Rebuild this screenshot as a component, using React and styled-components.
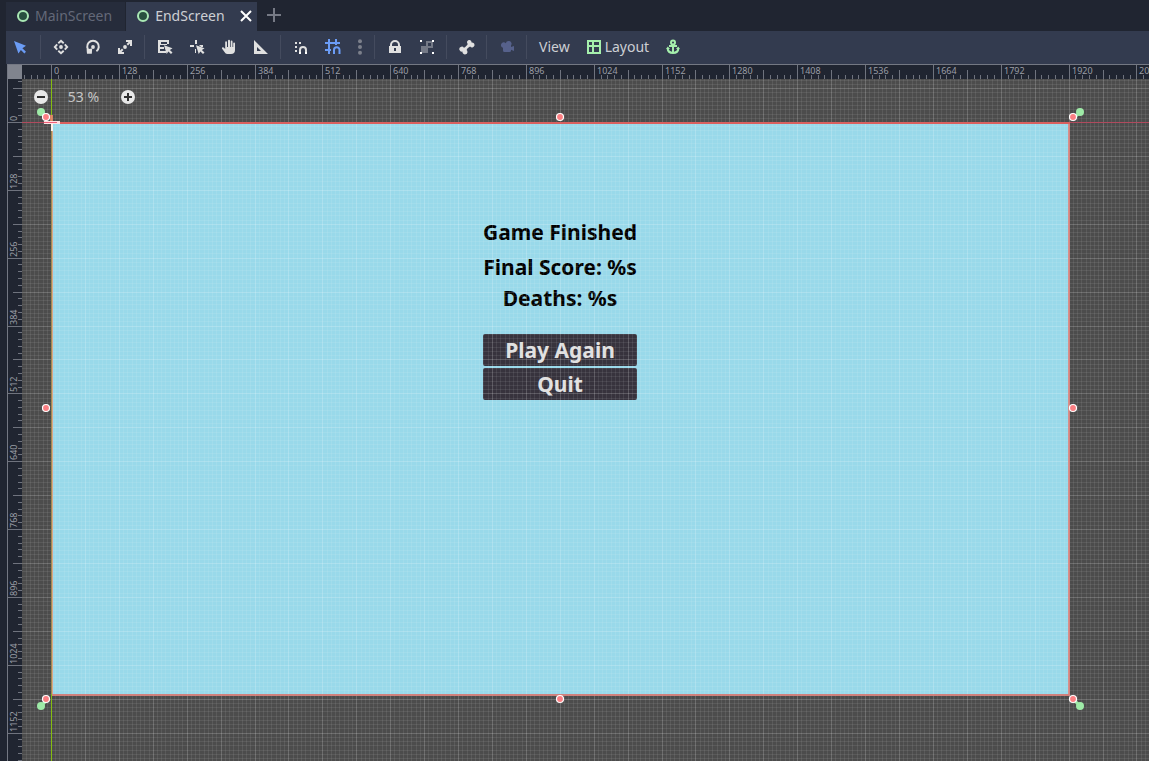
import React, { useLayoutEffect, useRef, useState } from "react";
import styled, { createGlobalStyle } from "styled-components";

const ZOOM = 0.53;
const ORIGIN = { x: 29, y: 43 };
const RULER = 14;
const SCREEN = { w: Math.round(1920 * ZOOM), h: Math.round(1080 * ZOOM) };

const GlobalStyle = createGlobalStyle`
  * { box-sizing: border-box; }
  body { margin: 0; background: #202531; overflow: hidden; }
  button, input { font: inherit; color: inherit; }
`;

const Editor = styled.main`
  height: 100vh;
  display: flex;
  flex-direction: column;
  padding-left: 6px;
  background: #202531;
  color: #cdcfd4;
  font: 14px/20px "Noto Sans", "Open Sans", sans-serif;
`;

const TabBar = styled.nav`
  display: flex;
  align-items: stretch;
  height: 31px;
  padding-top: 2px;
`;

const Tab = styled.div`
  display: flex;
  align-items: center;
  gap: 13px;
  padding: ${(p) => (p.$active ? "0 3px 2px 9px" : "0 13px 2px 8px")};
  background: ${(p) => (p.$active ? "#333b4f" : "#262c3b")};
  border-left: 1px solid ${(p) => (p.$active ? "#202531" : "transparent")};
  color: ${(p) => (p.$active ? "#cdcfd4" : "#636878")};
`;

const PlainButton = styled.button`
  display: inline-flex;
  align-items: center;
  justify-content: center;
  padding: 0;
  border: 0;
  background: none;
  cursor: pointer;
`;

const TabLabel = styled(PlainButton)`
  gap: 4px;
`;

const AddTab = styled(PlainButton)`
  width: 34px;
  padding-bottom: 3px;
  color: #767a85;
`;

const Toolbar = styled.div`
  display: flex;
  align-items: center;
  gap: 4px;
  height: 33px;
  padding: 0 0 2px 1px;
  background: #333b4f;
`;

const ToolButton = styled(PlainButton)`
  height: 28px;
  width: ${(p) => (p.$narrow ? "18px" : "28px")};
  color: ${(p) => p.$color || "#e0e0e0"};
`;

const MenuButton = styled(PlainButton)`
  height: 28px;
  padding: 0 6px;
  gap: 3px;
`;

const Separator = styled.span`
  width: 4px;
  height: 24px;
  background: linear-gradient(#444b5e, #444b5e) 1px 0 / 1px 100% no-repeat;
`;

const Icon = styled.svg`
  display: block;
  flex: none;
  fill: currentColor;
  color: ${(p) => p.$color || "inherit"};
`;

const Workspace = styled.section`
  flex: 1;
  min-height: 0;
  margin-left: 1px;
  display: grid;
  grid-template: 14px minmax(0, 1fr) / 14px minmax(0, 1fr);
  border: solid #747883;
  border-width: 1px 0 0 1px;
`;

const Corner = styled.div`
  background: #80848e;
`;

const RulerSvg = styled.svg`
  width: 100%;
  height: 100%;
  display: block;
  overflow: hidden;
  background: #202531;
  shape-rendering: crispEdges;
  text {
    font: 9px "Noto Sans", "Open Sans", sans-serif;
    fill: #9a9da5;
  }
`;

const Viewport = styled.div`
  position: relative;
  overflow: hidden;
  background: #4c4c4c;
`;

const GameScreen = styled.div`
  position: absolute;
  left: ${ORIGIN.x}px;
  top: ${ORIGIN.y}px;
  width: ${SCREEN.w}px;
  height: ${SCREEN.h}px;
  display: flex;
  flex-direction: column;
  align-items: center;
  padding-top: 95px;
  background: #99d9ea;
  color: #000;
  font: bold 21px/30px "Noto Sans", "Open Sans", sans-serif;
`;

const Title = styled.h1`
  margin: 0 0 5px;
  font: inherit;
`;

const Stat = styled.p`
  margin: 0;
  line-height: 31px;
`;

const GameActions = styled.div`
  display: flex;
  flex-direction: column;
  gap: 2px;
  width: 154px;
  margin-top: 20px;
`;

const GameButton = styled(PlainButton)`
  height: 32px;
  border-radius: 2px;
  background: #37333d;
  color: #e0e0e0;
`;

const Overlay = styled.svg`
  position: absolute;
  inset: 0;
  width: 100%;
  height: 100%;
  pointer-events: none;
`;

const ZoomControl = styled.div`
  position: absolute;
  left: 11px;
  top: 10px;
  display: flex;
  align-items: center;
  height: 16px;
`;

const ZoomValue = styled(PlainButton)`
  width: 71px;
  height: 20px;
  padding-right: 2px;
  color: #c4c4c4;
`;

const range = (from, to) => Array.from({ length: Math.max(0, to - from + 1) }, (_, i) => i + from);

function useSize() {
  const ref = useRef(null);
  const [size, setSize] = useState({ width: 0, height: 0 });
  useLayoutEffect(() => {
    const measure = () => {
      const box = ref.current.getBoundingClientRect();
      setSize({ width: box.width, height: box.height });
    };
    measure();
    window.addEventListener("resize", measure);
    return () => window.removeEventListener("resize", measure);
  }, []);
  return [ref, size];
}

const icons = {
  select: <path d="M1 2 5.4 14.5 7.9 10.9 11.4 14.4 13 12.8 9.4 9.3 13 6.7Z" />,
  move: (
    <>
      <circle cx="8" cy="8" r="1.9" />
      <path
        d="M5.3 4.2 8 1.8 10.7 4.2M5.3 11.8 8 14.2 10.7 11.8M4.2 5.3 1.8 8 4.2 10.7M11.8 5.3 14.2 8 11.8 10.7"
        fill="none"
        stroke="currentColor"
        strokeWidth="1.9"
      />
    </>
  ),
  rotate: (
    <>
      <path d="M4.6 12.2A5.8 5.8 0 1 1 11.4 12.2" fill="none" stroke="currentColor" strokeWidth="2" />
      <path d="M1.6 10.2 7.2 9.5 6.8 14.7 2 14.7Z" />
      <circle cx="8" cy="8" r="1.9" />
    </>
  ),
  scale: (
    <>
      <path d="M9 1H15V7H13V4.5L11 6.4 9.6 5 11.5 3H9ZM1 9H3V11.5L5 9.6 6.4 11 4.5 13H7V15H1Z" />
      <circle cx="8" cy="8" r="1.9" />
    </>
  ),
  list: (
    <>
      <path d="M1 1H12V3H1ZM1 3H3V14H1ZM10 3H12V5H10ZM3 5H10V6H3ZM3 8H7V10H3ZM3 12H9V14H3ZM3 3H4V6H3Z" />
      <path d="M7 6.2 15.5 9.2 12.9 11 15.5 13.6 14 15 11.4 12.5 9.7 15Z" />
    </>
  ),
  pivot: (
    <>
      <path d="M6 1H8V5H6ZM1 6H5V8H1ZM10 6H14V8H12ZM6 10H7V14H6Z" />
      <path d="M7 6.2 15.5 9.2 12.9 11 15.5 13.6 14 15 11.4 12.5 9.7 15Z" />
    </>
  ),
  hand: (
    <path d="M7 1.8V8H6V3.2A.9.9 0 0 0 4.2 3.2V10L2.6 8.5A1 1 0 0 0 1.1 9.8L4.4 14.2Q5 15 6.4 15H10Q14 15 14 11V4.4A.9.9 0 0 0 12.2 4.4V8H11.5V2.5A.9.9 0 0 0 9.7 2.5V8H9V1.8A1 1 0 0 0 7 1.8Z" />
  ),
  ruler: <path fillRule="evenodd" d="M1 1 15 15H1ZM4 8V12H8Z" />,
  snap: (
    <>
      <path d="M2 3H4V5H2ZM6 3H8V5H6ZM2 7H4V9H2ZM2 11H4V13H2Z" />
      <path d="M7 13V11A3 3 0 0 1 13 11V13" fill="none" stroke="currentColor" strokeWidth="2" />
      <path d="M6 13H8V15H6ZM12 13H14V15H12Z" fill="#fff" />
    </>
  ),
  gridSnap: (
    <>
      <path d="M3 0H5V3H10V0H12V3H15V5H5V10H6V12H5V15H3V12H0V10H3V5H0V3H3ZM10 5H12V6H10Z" />
      <path d="M9 15V11A2.7 2.7 0 0 1 14.5 11V15" fill="none" stroke="currentColor" strokeWidth="2" />
    </>
  ),
  dots: (
    <>
      <circle cx="8" cy="2.3" r="2" />
      <circle cx="8" cy="8" r="2" />
      <circle cx="8" cy="13.7" r="2" />
    </>
  ),
  lock: (
    <path
      fillRule="evenodd"
      d="M8 1A5 5 0 0 0 3 6V7H2V14H14V7H13V6A5 5 0 0 0 8 1ZM8 3A3 3 0 0 1 11 6V7H5V6A3 3 0 0 1 8 3ZM7 9H9V12H7Z"
    />
  ),
  group: (
    <>
      <path d="M7 2H14V9H9V14H2V7H7Z" fill="#747986" />
      <path d="M9 4H12V7H9Z" fill="#333b4f" />
      <path d="M1 1H3V3H1ZM13 1H15V3H13ZM1 13H3V15H1ZM13 13H15V15H13Z" />
    </>
  ),
  bone: (
    <path d="M10.6 1A2.3 2.3 0 0 0 8.7 4.9L8.2 6 6 8.2 4.9 8.7A2.5 2.5 0 1 0 3.5 12.5 2.5 2.5 0 1 0 7.6 11.1L8.4 9.6 9.6 8.4 11.1 7.6A2.5 2.5 0 1 0 12.5 3.5 2.3 2.3 0 0 0 10.6 1Z" />
  ),
  camera: (
    <path d="M9.5 2A2.8 2.8 0 0 0 6.8 4.2 2.8 2.8 0 1 0 4 8.8V11.5A1.5 1.5 0 0 0 5.5 13H10.5A1.5 1.5 0 0 0 12 11.5V10.7L15 12V7L12 8V6.5A2.8 2.8 0 0 0 9.5 2Z" />
  ),
  layout: <path fillRule="evenodd" d="M1 1H15V15H1ZM3 3V6H6V3ZM8 3V6H13V3ZM3 8V13H6V8ZM8 8V13H13V8Z" />,
  anchor: (
    <>
      <circle cx="8" cy="3.5" r="2" fill="none" stroke="currentColor" strokeWidth="2" />
      <path d="M7 5H9V6H12V8H9V12.8Q12 12.2 12.3 10H11L13.2 7.5 15 10H14.3Q14 15 8 15T1.7 10H1L2.8 7.5 5 10H3.7Q4 12.2 7 12.8V8H4V6H7Z" />
    </>
  ),
  close: <path d="m3 3 10 10M13 3 3 13" fill="none" stroke="#fff" strokeWidth="2" />,
  plus: <path d="M8 1V15M1 8H15" fill="none" stroke="currentColor" strokeWidth="2" />,
  node: <circle cx="8" cy="8" r="5" fill="#28503f" stroke="#a9e8b4" strokeWidth="2" />,
  zoomOut: (
    <>
      <circle cx="8" cy="8" r="7" fill="#e8e8e8" />
      <path d="M4 7H12V9H4Z" fill="#303030" />
    </>
  ),
  zoomIn: (
    <>
      <circle cx="8" cy="8" r="7" fill="#e8e8e8" />
      <path d="M4 7H7V4H9V7H12V9H9V12H7V9H4Z" fill="#303030" />
    </>
  ),
};

const Glyph = ({ name, color }) => (
  <Icon width="16" height="16" viewBox="0 0 16 16" aria-hidden="true" $color={color}>
    {icons[name]}
  </Icon>
);

const toolGroups = [
  [{ icon: "select", label: "Select", color: "#6b9cf5" }],
  [
    { icon: "move", label: "Move" },
    { icon: "rotate", label: "Rotate" },
    { icon: "scale", label: "Scale" },
  ],
  [
    { icon: "list", label: "List select" },
    { icon: "pivot", label: "Edit pivot" },
    { icon: "hand", label: "Pan" },
    { icon: "ruler", label: "Ruler" },
  ],
  [
    { icon: "snap", label: "Smart snap" },
    { icon: "gridSnap", label: "Grid snap", color: "#6b9cf5" },
    { icon: "dots", label: "Snapping options", color: "#7c808b", narrow: true },
  ],
  [
    { icon: "lock", label: "Lock" },
    { icon: "group", label: "Group", color: "#ffffff" },
  ],
  [{ icon: "bone", label: "Skeleton" }],
  [{ icon: "camera", label: "Override camera", color: "#56618b" }],
];

const vLine = (x, from, to) => `M${x} ${from}H${x + 1}V${to}H${x}Z`;
const hLine = (y, from, to) => `M${from} ${y}V${y + 1}H${to}V${y}Z`;

function tickPath(offset, extent, vertical) {
  const step = (128 * ZOOM) / 10;
  const line = vertical ? hLine : vLine;
  return range(Math.ceil(-offset / step), Math.floor((extent - offset) / step))
    .map((i) => line(Math.round(offset + i * step), i % 10 === 0 ? 0 : i % 5 === 0 ? 5 : 10, RULER))
    .join("");
}

function Ruler({ vertical }) {
  const [ref, size] = useSize();
  const offset = vertical ? ORIGIN.y : ORIGIN.x;
  const extent = vertical ? size.height : size.width;
  const count = Math.floor((extent - offset) / (128 * ZOOM));
  return (
    <RulerSvg ref={ref} aria-hidden="true">
      <path d={tickPath(offset, extent, vertical)} fill="#6f737e" />
      {range(0, count).map((i) => {
        const at = Math.round(offset + i * 128 * ZOOM);
        return (
          <text key={i} transform={vertical ? `translate(9 ${at - 1}) rotate(-90)` : `translate(${at + 3} 9)`}>
            {i * 128}
          </text>
        );
      })}
    </RulerSvg>
  );
}

function gridPath(line, offset, extent, length, major) {
  const step = 8 * ZOOM;
  return range(Math.ceil(-offset / step), Math.floor((extent - offset) / step))
    .filter((i) => (i % 8 === 0) === major)
    .map((i) => line(Math.round(offset + i * step), 0, length))
    .join("");
}

function Grid({ width, height, major }) {
  return (
    <g fill="#fff" fillOpacity={major ? 0.19 : 0.08}>
      <path d={gridPath(vLine, ORIGIN.x, width, height, major)} />
      <path d={gridPath(hLine, ORIGIN.y, height, width, major)} />
    </g>
  );
}

function CanvasOverlay() {
  const [ref, { width, height }] = useSize();
  const { x, y } = ORIGIN;
  const { w, h } = SCREEN;
  const handles = [
    [-5, -5], [w / 2, -5], [w + 4, -5],
    [-5, h / 2], [w + 4, h / 2],
    [-5, h + 5], [w / 2, h + 5], [w + 4, h + 5],
  ];
  const anchors = [[-10, -10], [w + 11, -10], [-10, h + 12], [w + 11, h + 12]];
  return (
    <Overlay ref={ref} aria-hidden="true">
      <g shapeRendering="crispEdges">
        <Grid width={width} height={height} major={false} />
        <Grid width={width} height={height} major />
        <rect x="0" y={y} width={width} height="1" fill="#b04a5e" />
        <path
          fillRule="evenodd"
          fill="#dd8580"
          fillOpacity=".9"
          d={`M${x} ${y}h${w + 1}v${h + 2}h${-w - 1}zM${x + 2} ${y + 2}v${h - 2}h${w - 3}v${2 - h}z`}
        />
        <rect x={x} y={y} width={w + 1} height="2" fill="#d9605f" />
        <rect x={x} y="0" width="1" height={height} fill="#84bd10" />
        <rect x={x} y={y} width="1" height={h} fill="#a08c50" />
        <rect x={x + 1} y={y + 2} width="1" height={h - 2} fill="#dba58a" />
        <rect x={x - 1} y={y - 7} width="3" height="6" fill="#f58a70" fillOpacity=".8" />
        <rect x={x - 7} y={y - 1} width="16" height="3" fill="#ffe0e2" />
        <rect x={x} y={y + 2} width="2" height="7" fill="#fff0e8" />
        <rect x={x - 7} y={y} width="13" height="1" fill="#ee5f78" />
      </g>
      <g transform={`translate(${x} ${y})`}>
        {anchors.map(([ax, ay]) => (
          <g key={`${ax},${ay}`}>
            <path
              d={`M${ax} ${ay}l${ax < 0 ? 5 : -5} ${ay < 0 ? 5 : -5}`}
              stroke="#9eeaa7"
              strokeWidth="3"
            />
            <circle cx={ax} cy={ay} r="4" fill="#9eeaa7" />
          </g>
        ))}
        {handles.map(([hx, hy]) => (
          <circle key={`${hx},${hy}`} cx={hx} cy={hy} r="3.5" fill="#fb7f83" stroke="#fff" strokeWidth="1.2" />
        ))}
      </g>
    </Overlay>
  );
}

export default function App() {
  return (
    <Editor>
      <GlobalStyle />
      <TabBar aria-label="Open scenes">
        <Tab>
          <TabLabel>
            <Glyph name="node" />
            MainScreen
          </TabLabel>
        </Tab>
        <Tab $active>
          <TabLabel aria-current="page">
            <Glyph name="node" />
            EndScreen
          </TabLabel>
          <PlainButton aria-label="Close EndScreen">
            <Glyph name="close" />
          </PlainButton>
        </Tab>
        <AddTab aria-label="New scene">
          <Glyph name="plus" />
        </AddTab>
      </TabBar>
      <Toolbar role="toolbar" aria-label="Canvas tools">
        {toolGroups.map((group) => (
          <React.Fragment key={group[0].icon}>
            {group.map((tool) => (
              <ToolButton key={tool.icon} aria-label={tool.label} $color={tool.color} $narrow={tool.narrow}>
                <Glyph name={tool.icon} />
              </ToolButton>
            ))}
            <Separator />
          </React.Fragment>
        ))}
        <MenuButton>View</MenuButton>
        <MenuButton>
          <Glyph name="layout" color="#a5efac" />
          Layout
        </MenuButton>
        <ToolButton aria-label="Anchor mode" $color="#a5efac">
          <Glyph name="anchor" />
        </ToolButton>
      </Toolbar>
      <Workspace>
        <Corner />
        <Ruler />
        <Ruler vertical />
        <Viewport>
          <GameScreen>
            <Title>Game Finished</Title>
            <Stat>Final Score: %s</Stat>
            <Stat>Deaths: %s</Stat>
            <GameActions>
              <GameButton>Play Again</GameButton>
              <GameButton>Quit</GameButton>
            </GameActions>
          </GameScreen>
          <CanvasOverlay />
          <ZoomControl>
            <PlainButton aria-label="Zoom out">
              <Glyph name="zoomOut" />
            </PlainButton>
            <ZoomValue>53 %</ZoomValue>
            <PlainButton aria-label="Zoom in">
              <Glyph name="zoomIn" />
            </PlainButton>
          </ZoomControl>
        </Viewport>
      </Workspace>
    </Editor>
  );
}
